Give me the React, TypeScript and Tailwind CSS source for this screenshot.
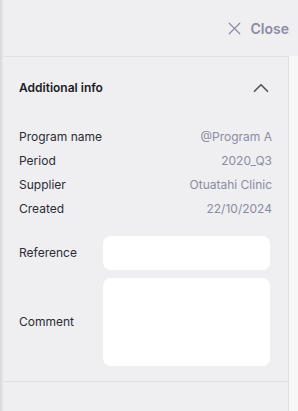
import { X, ChevronUp } from "lucide-react"

const details = [
  { label: "Program name", value: "@Program A" },
  { label: "Period", value: "2020_Q3" },
  { label: "Supplier", value: "Otuatahi Clinic" },
  { label: "Created", value: "22/10/2024" },
]

export default function App() {
  return (
    <div className="w-[298px] h-[411px] flex bg-[#efeff2] overflow-hidden font-['Inter',sans-serif]">
      {/* left drawer edge */}
      <div className="w-[3px] bg-gradient-to-r from-[#d6d6da] to-[#e9e9ec]" />

      <div className="flex-1 flex flex-col">
        <div className="h-[56px] flex items-center justify-end pr-[9px]">
          <button className="flex items-center gap-[6px] text-[#8b8ba1]">
            <X size={21} strokeWidth={1.4} />
            <span className="text-[14px] font-semibold">Close</span>
          </button>
        </div>

        <div className="flex-1 flex">
          <div className="w-[286px] border-r border-[#e1e1e5]">
            <div className="border-y border-[#e1e1e5] pl-4 pr-[16px] pb-[15px]">
              <div className="h-[62px] flex items-center justify-between">
                <h2 className="text-[12px] font-semibold text-[#1c1c22]">Additional info</h2>
                <ChevronUp size={26} strokeWidth={1.6} className="text-[#55555f] -mr-[2px]" />
              </div>

              <div className="flex flex-col pt-[6px]">
                {details.map((d) => (
                  <div key={d.label} className="h-[24px] flex items-center justify-between text-[12px]">
                    <span className="text-[#2b2b33]">{d.label}</span>
                    <span className="text-[#8b8ba1]">{d.value}</span>
                  </div>
                ))}
              </div>

              <div className="mt-[15px] flex flex-col gap-[8px] pr-[2px]">
                <div className="flex items-center">
                  <label className="w-[84px] shrink-0 text-[12px] text-[#2b2b33]">Reference</label>
                  <input className="w-0 flex-1 h-[34px] rounded-[8px] bg-white outline-none px-2 text-[12px]" />
                </div>
                <div className="flex items-center">
                  <label className="w-[84px] shrink-0 text-[12px] text-[#2b2b33]">Comment</label>
                  <textarea className="w-0 flex-1 h-[88px] rounded-[8px] bg-white outline-none px-2 py-1 text-[12px] resize-none" />
                </div>
              </div>
            </div>
          </div>
          <div className="flex-1 bg-[#f7f7f8]" />
        </div>
      </div>
    </div>
  )
}
